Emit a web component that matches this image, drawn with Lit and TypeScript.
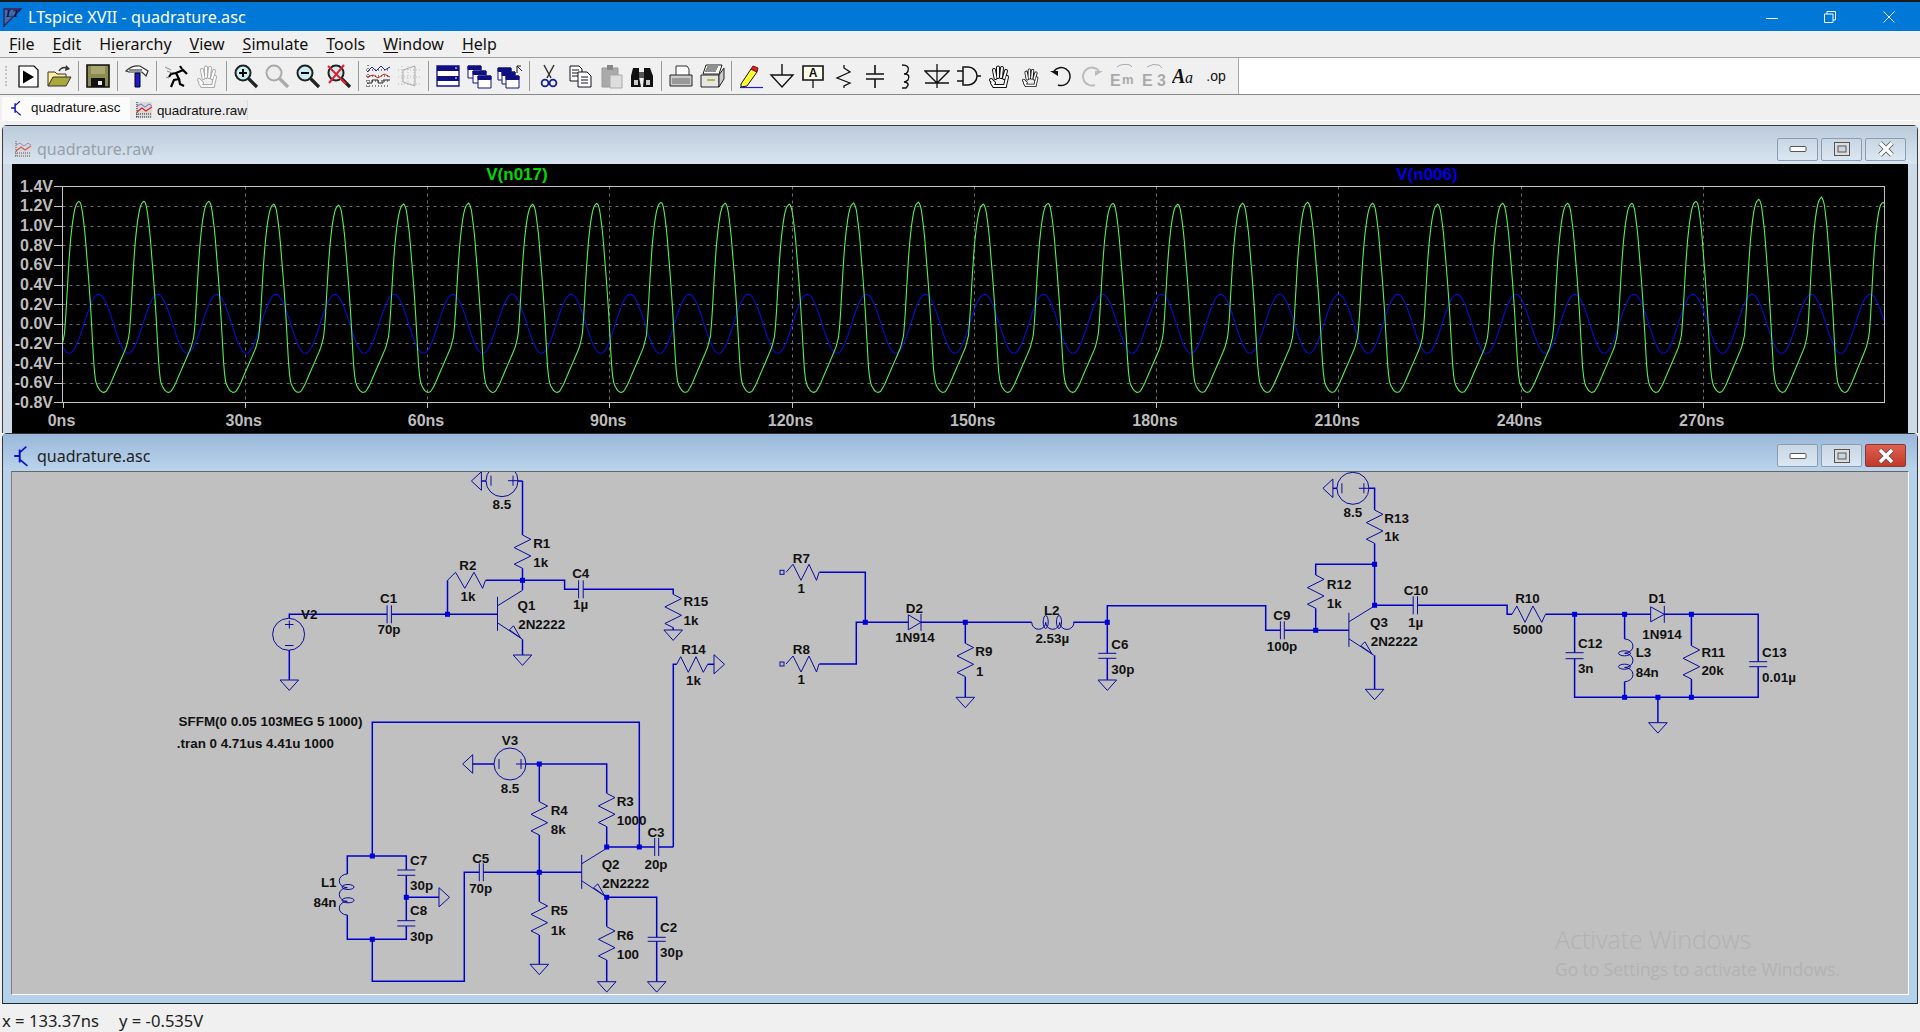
import { LitElement, html, css, svg } from "lit";
import { customElement } from "lit/decorators.js";

type P = [number, number];
const pl = (pts: P[]) => pts.map((p) => p.join(",")).join(" ");

// ---------- schematic primitives (coordinates are in page pixels) ----------
const wire = (...pts: P[]) => svg`<polyline class="w" points=${pl(pts)}></polyline>`;
const line = (...pts: P[]) => svg`<polyline class="s" points=${pl(pts)}></polyline>`;
const node = (x: number, y: number) => svg`<rect class="n" x=${x - 2.5} y=${y - 2.5} width="5" height="5"></rect>`;
const lab = (x: number, y: number, t: string, a: "start" | "middle" = "start") =>
  svg`<text class="lb" x=${x} y=${y} text-anchor=${a} dominant-baseline="central">${t}</text>`;
const gndD = (x: number, y: number) => line([x, y], [x + 9.3, y], [x, y + 10.4], [x - 9.3, y], [x, y]);
const gndR = (x: number, y: number) => line([x, y], [x, y + 9.6], [x + 10.5, y], [x, y - 9.6], [x, y]);
const gndL = (x: number, y: number) => line([x, y], [x, y + 9.3], [x - 10, y], [x, y - 9.3], [x, y]);
const resV = (x: number, y: number) =>
  line([x, y], [x + 8.3, y + 4.3], [x - 8.3, y + 12.6], [x + 8.3, y + 21], [x - 8.3, y + 29.2], [x, y + 33.3]);
const resH = (x: number, y: number, w = 33) => {
  const s = w / 33;
  return line([x, y], [x + 7 * s, y - 8], [x + 15 * s, y + 8], [x + 23 * s, y - 8], [x + 30.5 * s, y + 8], [x + 33 * s, y]);
};
const capV = (x: number, y: number, h = 5) =>
  svg`${line([x - 9, y], [x + 9, y])}${line([x - 9, y + h], [x + 9, y + h])}`;
const capH = (x: number, x2: number, y: number) =>
  svg`${line([x, y - 9], [x, y + 9])}${line([x2, y - 9], [x2, y + 9])}`;
const source = (cx: number, cy: number) => svg`<circle class="s" cx=${cx} cy=${cy} r="16"></circle>`;
const srcH = (cx: number, cy: number) => svg`${source(cx, cy)}
  ${line([cx - 11, cy - 5], [cx - 11, cy + 5])}
  ${line([cx + 6, cy], [cx + 16, cy])}${line([cx + 11, cy - 5], [cx + 11, cy + 5])}`;
const npn = (x: number, y: number) => svg`
  ${line([x, y - 17.5], [x, y + 16.5])}
  ${line([x, y - 8.5], [x + 25, y - 24])}
  ${line([x, y + 8.5], [x + 25, y + 25])}
  ${line([x + 12, y + 15.5], [x + 16, y + 11.5], [x + 23, y + 23.5], [x + 12, y + 15.5])}`;
const coilV = (x: number, y: number, h: number, dir: number) => {
  const a = h / 3;
  const sw = dir < 0 ? 0 : 1;
  return svg`<path class="s" d="M${x} ${y} a${a / 1.7} ${a / 2} 0 0 ${sw} 0 ${a} a${a / 1.7} ${a / 2} 0 0 ${sw} 0 ${a} a${a / 1.7} ${a / 2} 0 0 ${sw} 0 ${a}"></path>`;
};
const eye = (cx: number, cy: number, rx: number, ry: number) =>
  svg`<ellipse class="s" cx=${cx} cy=${cy} rx=${rx} ry=${ry}></ellipse>`;
const diodeR = (x: number, x2: number, y: number) => svg`
  ${line([x, y - 7.5], [x2, y], [x, y + 7.5], [x, y - 7.5])}${line([x2, y - 8.5], [x2, y + 8.5])}`;
const openSq = (x: number, y: number) => svg`<rect class="s" x=${x - 2} y=${y - 2} width="4" height="4"></rect>`;

// ---------- waveform data ----------
const Y = (v: number) => 323.8 - v * 98.2;
const shape: P[] = [
  [0, 1.25], [1.5, 1.23], [3, 1.17], [4.5, 1.05], [6, 0.92], [8, 0.66], [9.5, 0.47], [11.5, 0.18], [13.5, -0.18], [15, -0.45],
  [16.5, -0.58], [18, -0.63], [21, -0.68], [24, -0.7], [27, -0.69], [31, -0.62], [36, -0.5], [42, -0.36], [47, -0.24], [50, -0.12],
  [51.5, 0.08], [53, 0.36], [54.5, 0.62], [56, 0.83], [58, 1.02], [60, 1.15], [62, 1.22], [64.7, 1.25],
];
const peakAmp = [1.25, 1.25, 1.25, 1.22, 1.21, 1.22, 1.23, 1.22, 1.23, 1.24, 1.23, 1.22, 1.23, 1.24, 1.22, 1.23, 1.23, 1.22, 1.23, 1.24, 1.23, 1.22, 1.23, 1.23, 1.23, 1.25, 1.27, 1.29, 1.24, 1.24];
const offs: P[] = [[0, 0], [6, 2.3], [12, 0], [18, 2], [23, 4.3], [25, 3.5], [27, 0], [28, -3], [30, -5]];
const peakX = (i: number) => {
  let o = 0;
  for (let k = 0; k < offs.length - 1; k++) {
    if (i >= offs[k][0] && i <= offs[k + 1][0]) {
      o = offs[k][1] + ((offs[k + 1][1] - offs[k][1]) * (i - offs[k][0])) / (offs[k + 1][0] - offs[k][0]);
    }
  }
  return 79 + 64.54 * i + o;
};
const greenV = (x: number) => {
  let i = -1;
  while (peakX(i + 1) <= x) i++;
  const a = peakX(i), b = peakX(i + 1);
  const t = ((x - a) / (b - a)) * 64.7;
  let v = 0;
  for (let k = 0; k < shape.length - 1; k++) {
    if (t >= shape[k][0] && t <= shape[k + 1][0]) {
      v = shape[k][1] + ((shape[k + 1][1] - shape[k][1]) * (t - shape[k][0])) / (shape[k + 1][0] - shape[k][0]);
      break;
    }
  }
  if (v > 0) {
    const pa = peakAmp[Math.max(i, 0)], pb = peakAmp[Math.max(i + 1, 0)];
    v = (v * (t < 32 ? pa : pb)) / 1.25;
  }
  return v;
};
const greenPts = () => {
  const out: string[] = [];
  for (let x = 62.5; x <= 1884.5; x += 1) out.push(`${x},${Y(greenV(x)).toFixed(1)}`);
  return out.join(" ");
};
const bluePts = () => {
  const out: string[] = [];
  for (let x = 62.5; x <= 1884.5; x += 1) {
    const v = 0.3 * Math.cos((2 * Math.PI * (x - 98.7)) / 59.05);
    out.push(`${x},${Y(v).toFixed(1)}`);
  }
  return out.join(" ");
};

// ---------- toolbar icons ----------
const handLarge = (c: string) => svg`
  <g fill="none" stroke-linecap="round">
    <path d="M6 20 L8 23 H19 L21 14 M5 17 L8 20 M8 7 L9.5 15 M12 4.5 V14 M16 5 L15 14 M20 8 L18 15" stroke=${c} stroke-width="4"></path>
    <path d="M6 20 L8 23 H19 L21 14 M5 17 L8 20 M8 7 L9.5 15 M12 4.5 V14 M16 5 L15 14 M20 8 L18 15" stroke="#fff" stroke-width="2"></path>
  </g>`;
const mag = (c: string, glass: string, extra: unknown = "") => svg`
  <circle cx="10" cy="10" r="7.5" fill=${glass} stroke=${c} stroke-width="2"></circle>
  <path d="M15.5 15.5 L24 24" stroke=${c} stroke-width="3.2"></path>${extra}`;
const plotIco = (d: string, r: string, b: string) => svg`
  <path d="M3 2 V24 M1 23 H25 M1 13 H25 M1 7 H25 M1 18 H25" stroke=${d} stroke-dasharray="1 2" fill="none"></path>
  <path d="M2 9 L7 4 L11 8 L16 3 L20 7 L25 4" stroke=${b} fill="none"></path>
  <path d="M2 14 L8 12 L13 15 L19 11 L25 14" stroke=${r} fill="none"></path>
  <path d="M2 20 H7 V17 H13 V20 H18 V17 H25" stroke=${d} fill="none"></path>`;
const ICONS: Record<string, unknown> = {
  run: svg`<path d="M4 3H19L23 7V24H4Z" fill="#fff" stroke="#000" stroke-width="1.2"></path><path d="M8 7.5L19 14 8 20.5Z" fill="#000"></path>`,
  open: svg`<path d="M2 23V9H9L11 11H20V15" fill="#ffef9c" stroke="#333"></path><path d="M2 23L7 14H25L20 23Z" fill="#a9a83c" stroke="#333"></path><path d="M13 8Q16 3 21 5" fill="none" stroke="#333" stroke-width="1.4"></path><path d="M20 2L24 6 19 8Z" fill="#333"></path>`,
  save: svg`<path d="M2 2H24V24H2Z" fill="#8c8c50" stroke="#111" stroke-width="1.6"></path><path d="M6 3H20V11H6Z" fill="#a8a870"></path><path d="M6 15H20V24H6Z" fill="#111"></path><path d="M13 18H17V22H13Z" fill="#eee"></path>`,
  hammer: svg`<path d="M2 8Q8 2 16 3L24 8 22 13 18 9H5Z" fill="#fff" stroke="#333" stroke-width="1.2"></path><path d="M5 7H18" stroke="#888" stroke-width="2"></path><path d="M11 10H16V24H11Z" fill="#1a1ad0" stroke="#001"></path>`,
  runner: svg`<path d="M17 3L19 6M8 24L11 17 16 16 13 10 20 7 24 11M13 10L8 11 6 14M16 16L17 21 21 23" fill="none" stroke="#000" stroke-width="2.2"></path><path d="M2 4L8 7M4 8L9 10M3 14L6 15" stroke="#888" fill="none"></path>`,
  handGray: handLarge("#aaa"),
  zoomIn: mag("#222", "#c8f0f0", svg`<path d="M6 10H14M10 6V14" stroke="#000" stroke-width="2"></path>`),
  zoomGray: mag("#aaa", "#eee"),
  zoomOut: mag("#222", "#c8f0f0", svg`<path d="M6 10H14" stroke="#000" stroke-width="2"></path>`),
  zoomX: mag("#222", "#c8f0f0", svg`<path d="M2 3L20 21M18 2L3 20" stroke="#e02030" stroke-width="2"></path>`),
  plot: plotIco("#222", "#d02020", "#2020c0"),
  plotGray: svg`<path d="M2 7H24M2 14H24M2 21H24M6 3V24M12 3V24M18 3V24" stroke="#bbb" stroke-dasharray="1 2" fill="none"></path><path d="M7 7L19 3V23L7 19Z" fill="none" stroke="#aaa"></path>`,
  tile: svg`<path d="M2 3H24V23H2Z" fill="#fff" stroke="#101080" stroke-width="1.3"></path><path d="M2 3H24V8H2ZM2 13H24V18H2Z" fill="#101080"></path><path d="M20 5H22M20 15H22" stroke="#fff"></path>`,
  casc: svg`<g stroke="#101080" fill="#fff"><path d="M2 3H15V15H2Z"></path><path d="M2 3H15V6.5H2Z" fill="#101080"></path><path d="M7 8H20V20H7Z"></path><path d="M7 8H20V11.5H7Z" fill="#101080"></path><path d="M12 13H25V25H12Z"></path><path d="M12 13H25V16.5H12Z" fill="#101080"></path></g>`,
  cascUp: svg`<g stroke="#101080" fill="#fff"><path d="M1 5H14V17H1Z"></path><path d="M1 5H14V8.5H1Z" fill="#101080"></path><path d="M5 9H18V21H5Z"></path><path d="M5 9H18V12.5H5Z" fill="#101080"></path><path d="M9 13H22V25H9Z"></path><path d="M9 13H22V16.5H9Z" fill="#101080"></path></g><path d="M20 10V3M20 3H24M20 3L25 8" fill="none" stroke="#222"></path>`,
  cut: svg`<path d="M8 2L15 15M18 2L11 15" stroke="#333" stroke-width="1.5" fill="none"></path><circle cx="9" cy="20" r="3.4" fill="none" stroke="#102090" stroke-width="1.8"></circle><circle cx="17" cy="20" r="3.4" fill="none" stroke="#102090" stroke-width="1.8"></circle>`,
  copy: svg`<path d="M3 3H12L15 6V18H3Z" fill="#fff" stroke="#112"></path><path d="M5 7H12M5 10H12M5 13H12" stroke="#112"></path><path d="M11 9H20L24 13V24H11Z" fill="#fff" stroke="#112"></path><path d="M14 14H21M14 17H21M14 20H21" stroke="#112"></path>`,
  paste: svg`<path d="M4 5H20V24H4Z" fill="#aaa" stroke="#999"></path><path d="M9 2H15V7H9Z" fill="#888"></path><path d="M12 12H24V25H12Z" fill="#ddd" stroke="#aaa"></path>`,
  find: svg`<path d="M4 5H10V14L12 24H2V13ZM15 5H21L24 13V24H14L15 14Z" fill="#111"></path><path d="M5 17H9V22H5ZM17 17H21V22H17Z" fill="#ccc"></path><path d="M10 9H15V15H10Z" fill="#555"></path>`,
  print: svg`<path d="M8 3H19L21 6V13H8Z" fill="#fff" stroke="#333"></path><path d="M2 12H24V23H2Z" fill="#ccc" stroke="#222"></path><path d="M4 15H22V21H4Z" fill="#999" stroke-dasharray="1 1"></path>`,
  printS: svg`<path d="M7 2H23L20 11H4Z" fill="#fff" stroke="#222"></path><path d="M8 4H19M7 6H18M6 8H17" stroke="#222"></path><path d="M2 12H20V24H2Z" fill="#e6e6e6" stroke="#222"></path><path d="M20 12L25 5V16L20 24Z" fill="#ccc" stroke="#222"></path><path d="M8 17H16" stroke="#b8b840" stroke-width="2"></path>`,
  pencil: svg`<path d="M3 21L13 6 19 9 9 23 3 24Z" fill="#ffff30" stroke="#111"></path><path d="M13 6L15 3 20 5 19 9Z" fill="#e02020" stroke="#711"></path><path d="M2 24.5H25" stroke="#2020c0" stroke-width="1.2"></path>`,
  gnd: svg`<path d="M13 1V12M2 12H24L13 24Z" fill="none" stroke="#111" stroke-width="1.4"></path>`,
  label: svg`<path d="M3 3H23V17H3Z" fill="#ffe" stroke="#111" stroke-width="1.6"></path><path d="M13 17V25" stroke="#111" stroke-width="1.3"></path><text class="ti" x="13" y="14" text-anchor="middle" font-size="12" font-weight="700">A</text>`,
  res: svg`<path d="M13 2V5L19 9 6 15 19 20 13 23V25" fill="none" stroke="#111" stroke-width="1.3"></path>`,
  cap: svg`<path d="M13 2V11M4 11H22M4 16H22M13 16V25" fill="none" stroke="#111" stroke-width="1.6"></path>`,
  ind: svg`<path d="M9 2Q17 2 15 8 14 11 11 11 18 11 15 17 13 19 11 19 18 20 13 25H9" fill="none" stroke="#111" stroke-width="1.4"></path>`,
  diode: svg`<path d="M13 1V25M1 8H25L13 20 1 8ZM1 20H25" fill="none" stroke="#111" stroke-width="1.3"></path>`,
  gate: svg`<path d="M8 4H13A9 9 0 0 1 13 22H8ZM2 8H8M2 18H8M22 13H26" fill="none" stroke="#111" stroke-width="1.5"></path>`,
  handBig: svg`${handLarge("#111")}`,
  handSmall: svg`<g transform="translate(2.5 3.5) scale(.82)">${handLarge("#111")}</g>`,
  undo: svg`<path d="M6 8A9 9 0 1 1 10 22" fill="none" stroke="#111" stroke-width="1.5"></path><path d="M2 8H10V13Z" fill="#111"></path>`,
  redo: svg`<path d="M20 8A9 9 0 1 0 16 22" fill="none" stroke="#bbb" stroke-width="2"></path><path d="M24 8H16V13Z" fill="#bbb"></path>`,
  em: svg`<path d="M7 4Q12 0 20 2L22 4" fill="none" stroke="#aaa"></path><text class="tg" x="0" y="23" font-size="16">E</text><text class="tg" x="12" y="21" font-size="13">m</text>`,
  e3: svg`<path d="M6 4Q12 0 18 2L21 5" fill="none" stroke="#aaa"></path><text class="tg" x="1" y="23" font-size="16">E</text><text class="tg" x="16" y="23" font-size="16">3</text>`,
  aa: svg`<text x="0" y="20" font-family="'Liberation Serif',serif" font-style="italic" font-weight="700" font-size="20" fill="#111">A</text><text x="13" y="20" font-family="'Liberation Serif',serif" font-style="italic" font-size="16" fill="#111">a</text>`,
  op: svg`<text class="ti" x="13" y="18" text-anchor="middle" font-size="14">.op</text>`,
};
const TOOLS = [
  "run", "open", "|", "save", "|", "hammer", "|", "runner", "handGray", "|", "zoomIn", "zoomGray", "zoomOut", "zoomX", "|",
  "plot", "plotGray", "|", "tile", "casc", "cascUp", "|", "cut", "copy", "paste", "find", "|", "print", "printS", "|",
  "pencil", "gnd", "label", "res", "cap", "ind", "diode", "gate", "handBig", "handSmall", "undo", "redo", "em", "e3", "aa", "op",
];
const MENUS: [string, string, string][] = [
  ["", "F", "ile"], ["", "E", "dit"], ["H", "i", "erarchy"], ["", "V", "iew"], ["", "S", "imulate"], ["", "T", "ools"], ["", "W", "indow"], ["", "H", "elp"],
];

const transistorIcon = (w: number, h: number) => svg`<svg class="ico" viewBox="0 0 16 20" width=${w} height=${h}>
  <path d="M5 4V16M0 10H5" stroke="#1010c0" stroke-width="1.8" fill="none"></path>
  <path d="M5 7L11 1.5M5 13L12 19" stroke="#1010c0" stroke-width="1.5" fill="none"></path></svg>`;
const plotTabIcon = (opacity: number) => svg`<svg class="ico" viewBox="0 0 18 18" width="18" height="18" style=${`opacity:${opacity}`}>
  <path d="M1 1H17V17H1Z" fill="#d8d8d8"></path><path d="M2 1V17M1 16H17M1 13H17" stroke="#222" stroke-dasharray="1 1"></path>
  <path d="M2 5L6 3 10 6 14 3 17 5" stroke="#7070c0" fill="none"></path><path d="M2 11L7 7 11 10 17 6" stroke="#e02020" stroke-width="1.3" fill="none"></path></svg>`;

@customElement("app-root")
export class AppRoot extends LitElement {
  static styles = css`
    :host { display: block; width: 1920px; height: 1032px; overflow: hidden; }
    .app { height: 1032px; display: flex; flex-direction: column; background: #f0f0f0; font-family: "Noto Sans", sans-serif; }
    .titlebar { height: 29px; border-top: 2px solid #1a1a1a; background: #0078d7; color: #fff; display: flex; align-items: center; flex: none; }
    .logo { margin-left: 3px; flex: none; }
    .apptitle { margin-left: 5px; font-size: 16.2px; flex: 1; }
    .winbtn { width: 58.5px; height: 29px; display: flex; align-items: center; justify-content: center; flex: none; }
    .winbtns { display: flex; margin-right: 2px; }
    .menubar { height: 26px; flex: none; display: flex; align-items: center; gap: 18px; padding-left: 9px; font-size: 16px; color: #111; }
    .menubar u { text-underline-offset: 2px; }
    .toolbar { height: 36px; flex: none; display: flex; border-top: 1px solid #a0a0a0; border-bottom: 1px solid #888; }
    .tools { display: flex; align-items: center; padding-left: 12px; width: 1226px; border-right: 1px solid #a8a8a8; background: #f0f0f0; position: relative; }
    .tools::before { content: ""; position: absolute; left: 5px; top: 8px; bottom: 8px; border-left: 2px dotted #c4c4c4; }
    .tbtn { width: 31px; height: 26px; display: flex; align-items: center; justify-content: center; flex: none; }
    .sep { width: 1px; height: 30px; margin: 0 3.5px; background: #9a9a9a; flex: none; }
    .toolfill { flex: 1; background: #fff; }
    .ti { font-family: "Liberation Sans", sans-serif; fill: #111; }
    .tg { font-family: "Liberation Sans", sans-serif; font-weight: 700; fill: #aaa; }
    .tabs { height: 25px; flex: none; display: flex; align-items: flex-end; padding-left: 2px; border-bottom: 1px solid #fff; font-family: "Liberation Sans", sans-serif; font-size: 13.4px; color: #111; }
    .tab { display: flex; align-items: center; }
    .tab.on { width: 128px; height: 23px; background: #fbfbfb; padding-left: 9px; box-sizing: border-box; padding-bottom: 2px; gap: 7px; }
    .tab.off { width: 118px; height: 20px; background: #ececec; padding-left: 5px; box-sizing: border-box; border-right: 1px solid #ddd; gap: 4px; }
    .mdi { flex: 1; min-height: 0; display: flex; flex-direction: column; padding: 4px 2px 2px 2px; }
    .win { border: 1px solid #3c3c3c; box-sizing: border-box; border-radius: 5px 5px 0 0; display: flex; flex-direction: column; flex: none; }
    .raw { height: 308px; background: #cddbe8; border-bottom: none; border-radius: 5px 5px 0 0; }
    .asc { height: 571px; background: #b5d0ea; border-color: #333; border-bottom-color: #103030; }
    .wtitle { flex: none; display: flex; align-items: center; padding-left: 11px; gap: 5px; font-size: 16px; box-sizing: border-box; }
    .raw .wtitle { background: linear-gradient(#bccbda, #d8e5f1); color: #97a0a8; height: 38px; padding-top: 8px; }
    .asc .wtitle { background: linear-gradient(#9ab8da, #bad4ec); color: #222; height: 37px; padding-top: 6px; }
    .wname { flex: 1; }
    .mbtns { display: flex; gap: 3px; margin-right: 11px; }
    .mbtn { width: 41px; height: 23px; border: 1px solid #8d9db0; border-radius: 2px; box-sizing: border-box; display: flex; align-items: center; justify-content: center; background: linear-gradient(#c8d6e4, #dbe7f2); }
    .mbtn.close { background: linear-gradient(#e0604e, #c0392b); border-color: #8a3a30; }
    .plotwrap { margin: 0 9px 0 9px; flex: 1; min-height: 0; background: #000; }
    .plotwrap svg, .canvas svg { display: block; }
    .canvas { margin: 0 8px 0 8px; height: 522px; flex: none; border-top: 1px solid #666; border-left: 1px solid #808080; border-right: 1px solid #fff; border-bottom: 1px solid #fff; background: #c0c0c0; position: relative; }
    .canvas svg { width: 1896px; height: 522px; }
    .w { fill: none; stroke: #0000c8; stroke-width: 1.5; }
    .s { fill: none; stroke: #0a0aa0; stroke-width: 1; }
    .n { fill: #0000dc; }
    .lb { font-family: "Liberation Sans", sans-serif; font-weight: 700; font-size: 13.4px; fill: #111; }
    .ax { fill: #bdbdbd; font-family: "Liberation Sans", sans-serif; font-weight: 700; font-size: 16px; }
    .trace { font-size: 17px; }
    .grid { stroke: #6e6e6e; stroke-dasharray: 3 4; fill: none; }
    .axis { stroke: #c4c4c4; fill: none; }
    .activate { position: absolute; left: 1543px; top: 452px; color: #b2b2b2; font-family: "Open Sans", sans-serif; pointer-events: none; }
    .activate div { line-height: 30px; }
    .activate div:first-child { font-size: 25px; font-weight: 300; }
    .activate div:last-child { font-size: 17.4px; }
    .status { height: 26px; flex: none; display: flex; align-items: center; gap: 20px; padding: 2px 0 0 2px; box-sizing: border-box; font-size: 16.6px; color: #222; }
  `;

  private plot() {
    const ys = [1.4, 1.2, 1.0, 0.8, 0.6, 0.4, 0.2, 0, -0.2, -0.4, -0.6, -0.8];
    const xs = [0, 30, 60, 90, 120, 150, 180, 210, 240, 270];
    const X = (ns: number) => 62.5 + ns * 6.075;
    return html`<svg viewBox="12 164 1895 269" width="1895" height="269">
      ${ys.slice(1, -1).map((v) => svg`<line class="grid" x1="62.5" x2="1884.5" y1=${Math.round(Y(v)) + 0.5} y2=${Math.round(Y(v)) + 0.5}></line>`)}
      ${xs.slice(1).map((n) => svg`<line class="grid" x1=${Math.round(X(n)) + 0.5} x2=${Math.round(X(n)) + 0.5} y1="186.5" y2="402.5"></line>`)}
      <polyline points=${bluePts()} fill="none" stroke="#0a0ad0" stroke-width="1.1"></polyline>
      <polyline points=${greenPts()} fill="none" stroke="#55f055" stroke-width="1.1"></polyline>
      <rect class="axis" x="62.5" y="186.5" width="1822" height="216"></rect>
      ${ys.map((v) => svg`<line class="axis" x1="54" x2="62" y1=${Math.round(Y(v)) + 0.5} y2=${Math.round(Y(v)) + 0.5}></line>
        <text class="ax" x="53" y=${Y(v)} text-anchor="end" dominant-baseline="central">${(v < 0 ? "-" : "") + Math.abs(v).toFixed(1)}V</text>`)}
      ${xs.map((n) => svg`<line class="axis" x1=${Math.round(X(n)) + 0.5} x2=${Math.round(X(n)) + 0.5} y1="402" y2="408"></line>
        <text class="ax" x=${X(n) - 1} y="420" text-anchor="middle" dominant-baseline="central">${n}ns</text>`)}
      <text class="ax trace" x="517" y="174" text-anchor="middle" dominant-baseline="central" style="fill:#00d800">V(n017)</text>
      <text class="ax trace" x="1427" y="174" text-anchor="middle" dominant-baseline="central" style="fill:#0000e0">V(n006)</text>
    </svg>`;
  }

  private schematic() {
    return html`<svg viewBox="12 472 1896 522">
      <!-- left amplifier -->
      ${wire([522.5, 481], [522.5, 535])}${wire([481.4, 481], [486, 481])}
      ${srcH(502, 480.7)}${wire([518, 481], [522.5, 481])}${gndL(481.4, 481)}
      ${resV(522.5, 535)}${wire([522.5, 568.3], [522.5, 590])}
      ${wire([447.5, 614.3], [447.5, 580.3])}${resH(447.5, 580.3, 38)}
      ${wire([485.7, 580.3], [564.6, 580.3], [564.6, 589.3], [578.6, 589.3])}${capH(578.6, 583.2, 589.3)}
      ${wire([583.2, 589.3], [673.2, 589.3], [673.2, 594.3])}${resV(673.2, 594.3)}${wire([673.2, 627.6], [673.2, 630])}${gndD(673.2, 630)}
      ${wire([289.3, 618], [289.3, 614.3], [387.1, 614.3])}${capH(387.1, 391.4, 614.3)}${wire([391.4, 614.3], [497.5, 614.3])}
      ${source(288.6, 634.3)}${line([285, 624.5], [293.5, 624.5])}${line([289.3, 620.5], [289.3, 628.5])}${line([285, 645.5], [293.5, 645.5])}
      ${wire([289.3, 650], [289.3, 680])}${gndD(289.3, 680)}
      ${npn(497.5, 614.3)}${wire([522.5, 639.3], [522.5, 655])}${gndD(522.5, 655)}
      ${node(522.5, 580.3)}${node(447.5, 614.3)}
      ${wire([673.3, 847], [673.3, 664.3], [676.7, 664.3])}
      ${line([676.7, 664.3], [680.7, 656.7], [688.3, 672.3], [696, 656.7], [703.3, 672.3], [707.7, 664.3])}
      ${wire([707.7, 664.3], [714, 664.3])}${gndR(714, 664.3)}
      ${lab(501.8, 504.7, "8.5", "middle")}${lab(533.2, 543.3, "R1")}${lab(533.2, 562.7, "1k")}
      ${lab(467.9, 565.7, "R2", "middle")}${lab(467.9, 596.3, "1k", "middle")}
      ${lab(580.7, 573.7, "C4", "middle")}${lab(580.7, 604.7, "1µ", "middle")}
      ${lab(683.6, 601.3, "R15")}${lab(683.6, 620.7, "1k")}
      ${lab(517.5, 605.7, "Q1")}${lab(518.2, 624.7, "2N2222")}
      ${lab(388.6, 598.3, "C1", "middle")}${lab(389, 629.7, "70p", "middle")}${lab(301, 614.3, "V2")}
      ${lab(693.5, 649, "R14", "middle")}${lab(693.5, 680, "1k", "middle")}
      ${lab(178.6, 721.7, "SFFM(0 0.05 103MEG 5 1000)")}${lab(176.8, 743.7, ".tran 0 4.71us 4.41u 1000")}

      <!-- oscillator -->
      ${wire([372.3, 856], [372.3, 722.3], [639.3, 722.3], [639.3, 847])}
      ${wire([347.3, 874], [347.3, 856], [406.3, 856], [406.3, 870])}
      ${wire([347.3, 915], [347.3, 939.3], [406.3, 939.3], [406.3, 926])}
      ${wire([406.3, 875.3], [406.3, 920.7])}${capV(406.3, 870, 5.3)}${capV(406.3, 920.7, 5.3)}
      ${wire([406.3, 897.3], [439, 897.3])}${gndR(439, 897.3)}
      ${coilV(347.3, 874, 41, -1)}${eye(348, 887, 6, 2.5)}${eye(348, 900.3, 6, 2.5)}
      ${wire([372.3, 939.3], [372.3, 981.3], [464.3, 981.3], [464.3, 872.3], [479.3, 872.3])}${capH(479.3, 483.3, 872.3)}
      ${wire([483.3, 872.3], [581.7, 872.3])}
      ${wire([472.7, 764], [494, 764])}${gndL(472.7, 764)}${srcH(510, 764)}
      ${wire([526, 764], [606.7, 764], [606.7, 793.3])}${resV(606.7, 793.3)}${wire([606.7, 826.6], [606.7, 847])}
      ${wire([539.3, 764], [539.3, 801.7])}${resV(539.3, 801.7)}${wire([539.3, 835], [539.3, 901.7])}${resV(539.3, 901.7)}${wire([539.3, 935], [539.3, 964.3])}${gndD(539.3, 964.3)}
      ${wire([606.7, 847], [654.7, 847])}${capH(654.7, 658.7, 847)}${wire([658.7, 847], [673.3, 847])}
      ${npn(581.7, 872.3)}
      ${wire([606.7, 897.3], [606.7, 926.7])}${resV(606.7, 926.7)}${wire([606.7, 960], [606.7, 981.7])}${gndD(606.7, 981.7)}
      ${wire([606.7, 897.3], [656.7, 897.3], [656.7, 937.3])}${capV(656.7, 937.3, 4)}${wire([656.7, 941.3], [656.7, 981.7])}${gndD(656.7, 981.7)}
      ${[[372.3, 856], [372.3, 939.3], [406.3, 897.3], [539.3, 764], [539.3, 872.3], [606.7, 847], [639.3, 847], [606.7, 897.3]].map(([x, y]) => node(x, y))}
      ${lab(510, 740.7, "V3", "middle")}${lab(510, 788.7, "8.5", "middle")}
      ${lab(550.7, 810.7, "R4")}${lab(550.7, 829.7, "8k")}${lab(550.7, 910.7, "R5")}${lab(550.7, 930, "1k")}
      ${lab(616.7, 801.7, "R3")}${lab(616.7, 820.7, "1000")}${lab(656, 832.7, "C3", "middle")}${lab(656, 864, "20p", "middle")}
      ${lab(601.7, 864.7, "Q2")}${lab(602.3, 883.7, "2N2222")}${lab(480.7, 858, "C5", "middle")}${lab(480.7, 888.7, "70p", "middle")}
      ${lab(410, 860.7, "C7")}${lab(410, 885.3, "30p")}${lab(410, 910.7, "C8")}${lab(410, 936, "30p")}
      ${lab(328.7, 882, "L1", "middle")}${lab(325, 902.7, "84n", "middle")}
      ${lab(616.7, 935.7, "R6")}${lab(616.7, 954.7, "100")}${lab(660, 927.7, "C2")}${lab(660, 952.7, "30p")}

      <!-- mixer -->
      ${openSq(782, 572.3)}${resH(786, 572.3)}${wire([819.3, 572.3], [865.3, 572.3], [865.3, 622.3])}
      ${openSq(782, 664)}${resH(786, 664)}${wire([819.3, 664], [856.3, 664], [856.3, 622.3], [908.3, 622.3])}
      ${diodeR(908.3, 921, 622.3)}${wire([921, 622.3], [1031.7, 622.3])}
      ${wire([965.3, 622.3], [965.3, 643.3])}${resV(965.3, 643.3)}${wire([965.3, 676.7], [965.3, 697.3])}${gndD(965.3, 697.3)}
      <path class="s" d="M1031.7 622.3 a7 7 0 0 0 14 0 a7 7 0 0 0 14 0 a7 7 0 0 0 14.3 0"></path>
      ${eye(1045.7, 622, 2.5, 6.5)}${eye(1059, 622, 2.5, 6.5)}
      ${wire([1073.3, 622.3], [1107.3, 622.3], [1107.3, 653.3])}${capV(1107.3, 653.3)}${wire([1107.3, 658.3], [1107.3, 680])}${gndD(1107.3, 680)}
      ${wire([1107.3, 622.3], [1107.3, 605.7], [1265.7, 605.7], [1265.7, 630.3], [1280.4, 630.3])}
      ${node(865.3, 622.3)}${node(965.3, 622.3)}${node(1107.3, 622.3)}
      ${lab(801.3, 558.3, "R7", "middle")}${lab(801.3, 588, "1", "middle")}${lab(801.3, 649.3, "R8", "middle")}${lab(801.3, 679.3, "1", "middle")}
      ${lab(914.3, 608, "D2", "middle")}${lab(915, 637.7, "1N914", "middle")}${lab(975.3, 651.7, "R9")}${lab(976, 671, "1")}
      ${lab(1051.7, 610, "L2", "middle")}${lab(1052.3, 638, "2.53µ", "middle")}${lab(1111.3, 644, "C6")}${lab(1111.3, 669, "30p")}

      <!-- right stage -->
      ${capH(1280.4, 1284.3, 630.3)}${wire([1284.3, 630.3], [1348.9, 630.3])}
      ${gndL(1332.9, 488.3)}${wire([1332.9, 488.3], [1337, 488.3])}${srcH(1352.9, 488.3)}
      ${wire([1369, 488.3], [1374.6, 488.3], [1374.6, 510])}${resV(1374.6, 510)}${wire([1374.6, 543.3], [1374.6, 605.3])}
      ${wire([1374.6, 564.3], [1315.7, 564.3], [1315.7, 575])}${resV(1315.7, 575)}${wire([1315.7, 608.3], [1315.7, 630.3])}
      ${npn(1348.9, 630.3)}${wire([1374.6, 655.3], [1374.6, 689.3])}${gndD(1374.6, 689.3)}
      ${wire([1374.6, 605.3], [1413.2, 605.3])}${capH(1413.2, 1417.5, 605.3)}${wire([1417.5, 605.3], [1507.1, 605.3], [1507.1, 614.3], [1512, 614.3])}
      ${line([1512, 614.3], [1516.8, 606], [1525, 622.3], [1532.9, 606], [1541.8, 622.3], [1545.4, 614.3])}
      ${wire([1545.4, 614.3], [1650.7, 614.3])}${diodeR(1650.7, 1664.3, 614.3)}${wire([1664.3, 614.3], [1758.2, 614.3], [1758.2, 661.7])}
      ${capV(1758.2, 661.7)}${wire([1758.2, 666.7], [1758.2, 697.3], [1574.6, 697.3], [1574.6, 658.7])}${capV(1574.6, 652.7, 6)}${wire([1574.6, 652.7], [1574.6, 614.3])}
      ${wire([1624.6, 614.3], [1624.6, 639])}${coilV(1624.6, 639, 42.7, 1)}${eye(1624.5, 653.3, 6, 2.5)}${eye(1624.5, 666.7, 6, 2.5)}${wire([1624.6, 681.7], [1624.6, 697.3])}
      ${wire([1691.4, 614.3], [1691.4, 645.7])}${resV(1691.4, 645.7)}${wire([1691.4, 679], [1691.4, 697.3])}
      ${wire([1657.9, 697.3], [1657.9, 722.7])}${gndD(1657.9, 722.7)}
      ${[[1374.6, 564.3], [1374.6, 605.3], [1315.7, 630.3], [1574.6, 614.3], [1624.6, 614.3], [1691.4, 614.3], [1624.6, 697.3], [1657.9, 697.3], [1691.4, 697.3]].map(([x, y]) => node(x, y))}
      ${lab(1352.9, 512.7, "8.5", "middle")}${lab(1384.3, 518.7, "R13")}${lab(1384.3, 536.7, "1k")}
      ${lab(1326.8, 584.7, "R12")}${lab(1326.8, 603.7, "1k")}${lab(1281.8, 615.7, "C9", "middle")}${lab(1282, 646.7, "100p", "middle")}
      ${lab(1370, 622.7, "Q3")}${lab(1370.7, 641.7, "2N2222")}${lab(1416, 590.7, "C10", "middle")}${lab(1415.7, 622, "1µ", "middle")}
      ${lab(1527.5, 598.7, "R10", "middle")}${lab(1527.9, 629.3, "5000", "middle")}${lab(1657, 598.7, "D1", "middle")}${lab(1662, 634.7, "1N914", "middle")}
      ${lab(1577.9, 643.7, "C12")}${lab(1577.9, 668.7, "3n")}${lab(1635.7, 652, "L3")}${lab(1635.7, 672.3, "84n")}
      ${lab(1701.4, 652, "R11")}${lab(1701.4, 670.7, "20k")}${lab(1762.1, 652, "C13")}${lab(1762.1, 677, "0.01µ")}
    </svg>`;
  }

  private mdiBtns(active: boolean) {
    const c = "#fff", d = "#555";
    return html`<div class="mbtns">
      <div class="mbtn"><svg width="18" height="8" viewBox="0 0 18 8"><rect x="1" y="1.5" width="16" height="5" rx="1" fill=${c} stroke=${d}></rect></svg></div>
      <div class="mbtn"><svg width="18" height="16" viewBox="0 0 18 16"><rect x="1.5" y="1.5" width="15" height="13" fill="#ddd" stroke=${d}></rect><rect x="5" y="5" width="8" height="6" fill="#c8d6e4" stroke=${d}></rect></svg></div>
      <div class=${active ? "mbtn close" : "mbtn"}><svg width="18" height="16" viewBox="0 0 18 16"><path d="M3 2L15 14M15 2L3 14" stroke=${d} stroke-width="5"></path><path d="M3 2L15 14M15 2L3 14" stroke="#fff" stroke-width="3.4"></path></svg></div>
    </div>`;
  }

  render() {
    return html`<div class="app">
      <div class="titlebar">
        <svg class="logo" width="20" height="22" viewBox="0 0 20 22">
          <path d="M1 3H18L1 20Z" fill="#3d6fb0" stroke="#3a1a50" stroke-width="1.3"></path>
          <text x="3" y="11" font-family="'Liberation Serif',serif" font-style="italic" font-weight="700" font-size="11" fill="#1a1040">LT</text>
        </svg>
        <div class="apptitle">LTspice XVII - quadrature.asc</div>
        <div class="winbtns">
          <div class="winbtn"><svg width="12" height="12" viewBox="0 0 12 12"><path d="M0 7.5H12" stroke="#fff"></path></svg></div>
          <div class="winbtn"><svg width="12" height="12" viewBox="0 0 12 12"><path d="M.5 3H9V11.5H.5ZM3 3V.5H11.5V9H9" fill="none" stroke="#fff"></path></svg></div>
          <div class="winbtn"><svg width="12" height="12" viewBox="0 0 12 12"><path d="M.5 .5L11.5 11.5M11.5 .5L.5 11.5" stroke="#fff"></path></svg></div>
        </div>
      </div>
      <div class="menubar">${MENUS.map(([a, b, c]) => html`<span>${a}<u>${b}</u>${c}</span>`)}</div>
      <div class="toolbar">
        <div class="tools">
          ${TOOLS.map((t) => t === "|" ? html`<div class="sep"></div>` : html`<div class="tbtn"><svg width="26" height="26" viewBox="0 0 26 26">${ICONS[t]}</svg></div>`)}
        </div>
        <div class="toolfill"></div>
      </div>
      <div class="tabs">
        <div class="tab on">${transistorIcon(13, 16)}<span>quadrature.asc</span></div>
        <div class="tab off">${plotTabIcon(1)}<span>quadrature.raw</span></div>
      </div>
      <div class="mdi">
        <div class="win raw">
          <div class="wtitle">${plotTabIcon(0.7)}<span class="wname">quadrature.raw</span>${this.mdiBtns(false)}</div>
          <div class="plotwrap">${this.plot()}</div>
        </div>
        <div class="win asc">
          <div class="wtitle">${transistorIcon(18, 22)}<span class="wname">quadrature.asc</span>${this.mdiBtns(true)}</div>
          <div class="canvas">
            ${this.schematic()}
            <div class="activate"><div>Activate Windows</div><div>Go to Settings to activate Windows.</div></div>
          </div>
        </div>
      </div>
      <div class="status"><span>x = 133.37ns</span><span>y = -0.535V</span></div>
    </div>`;
  }
}
